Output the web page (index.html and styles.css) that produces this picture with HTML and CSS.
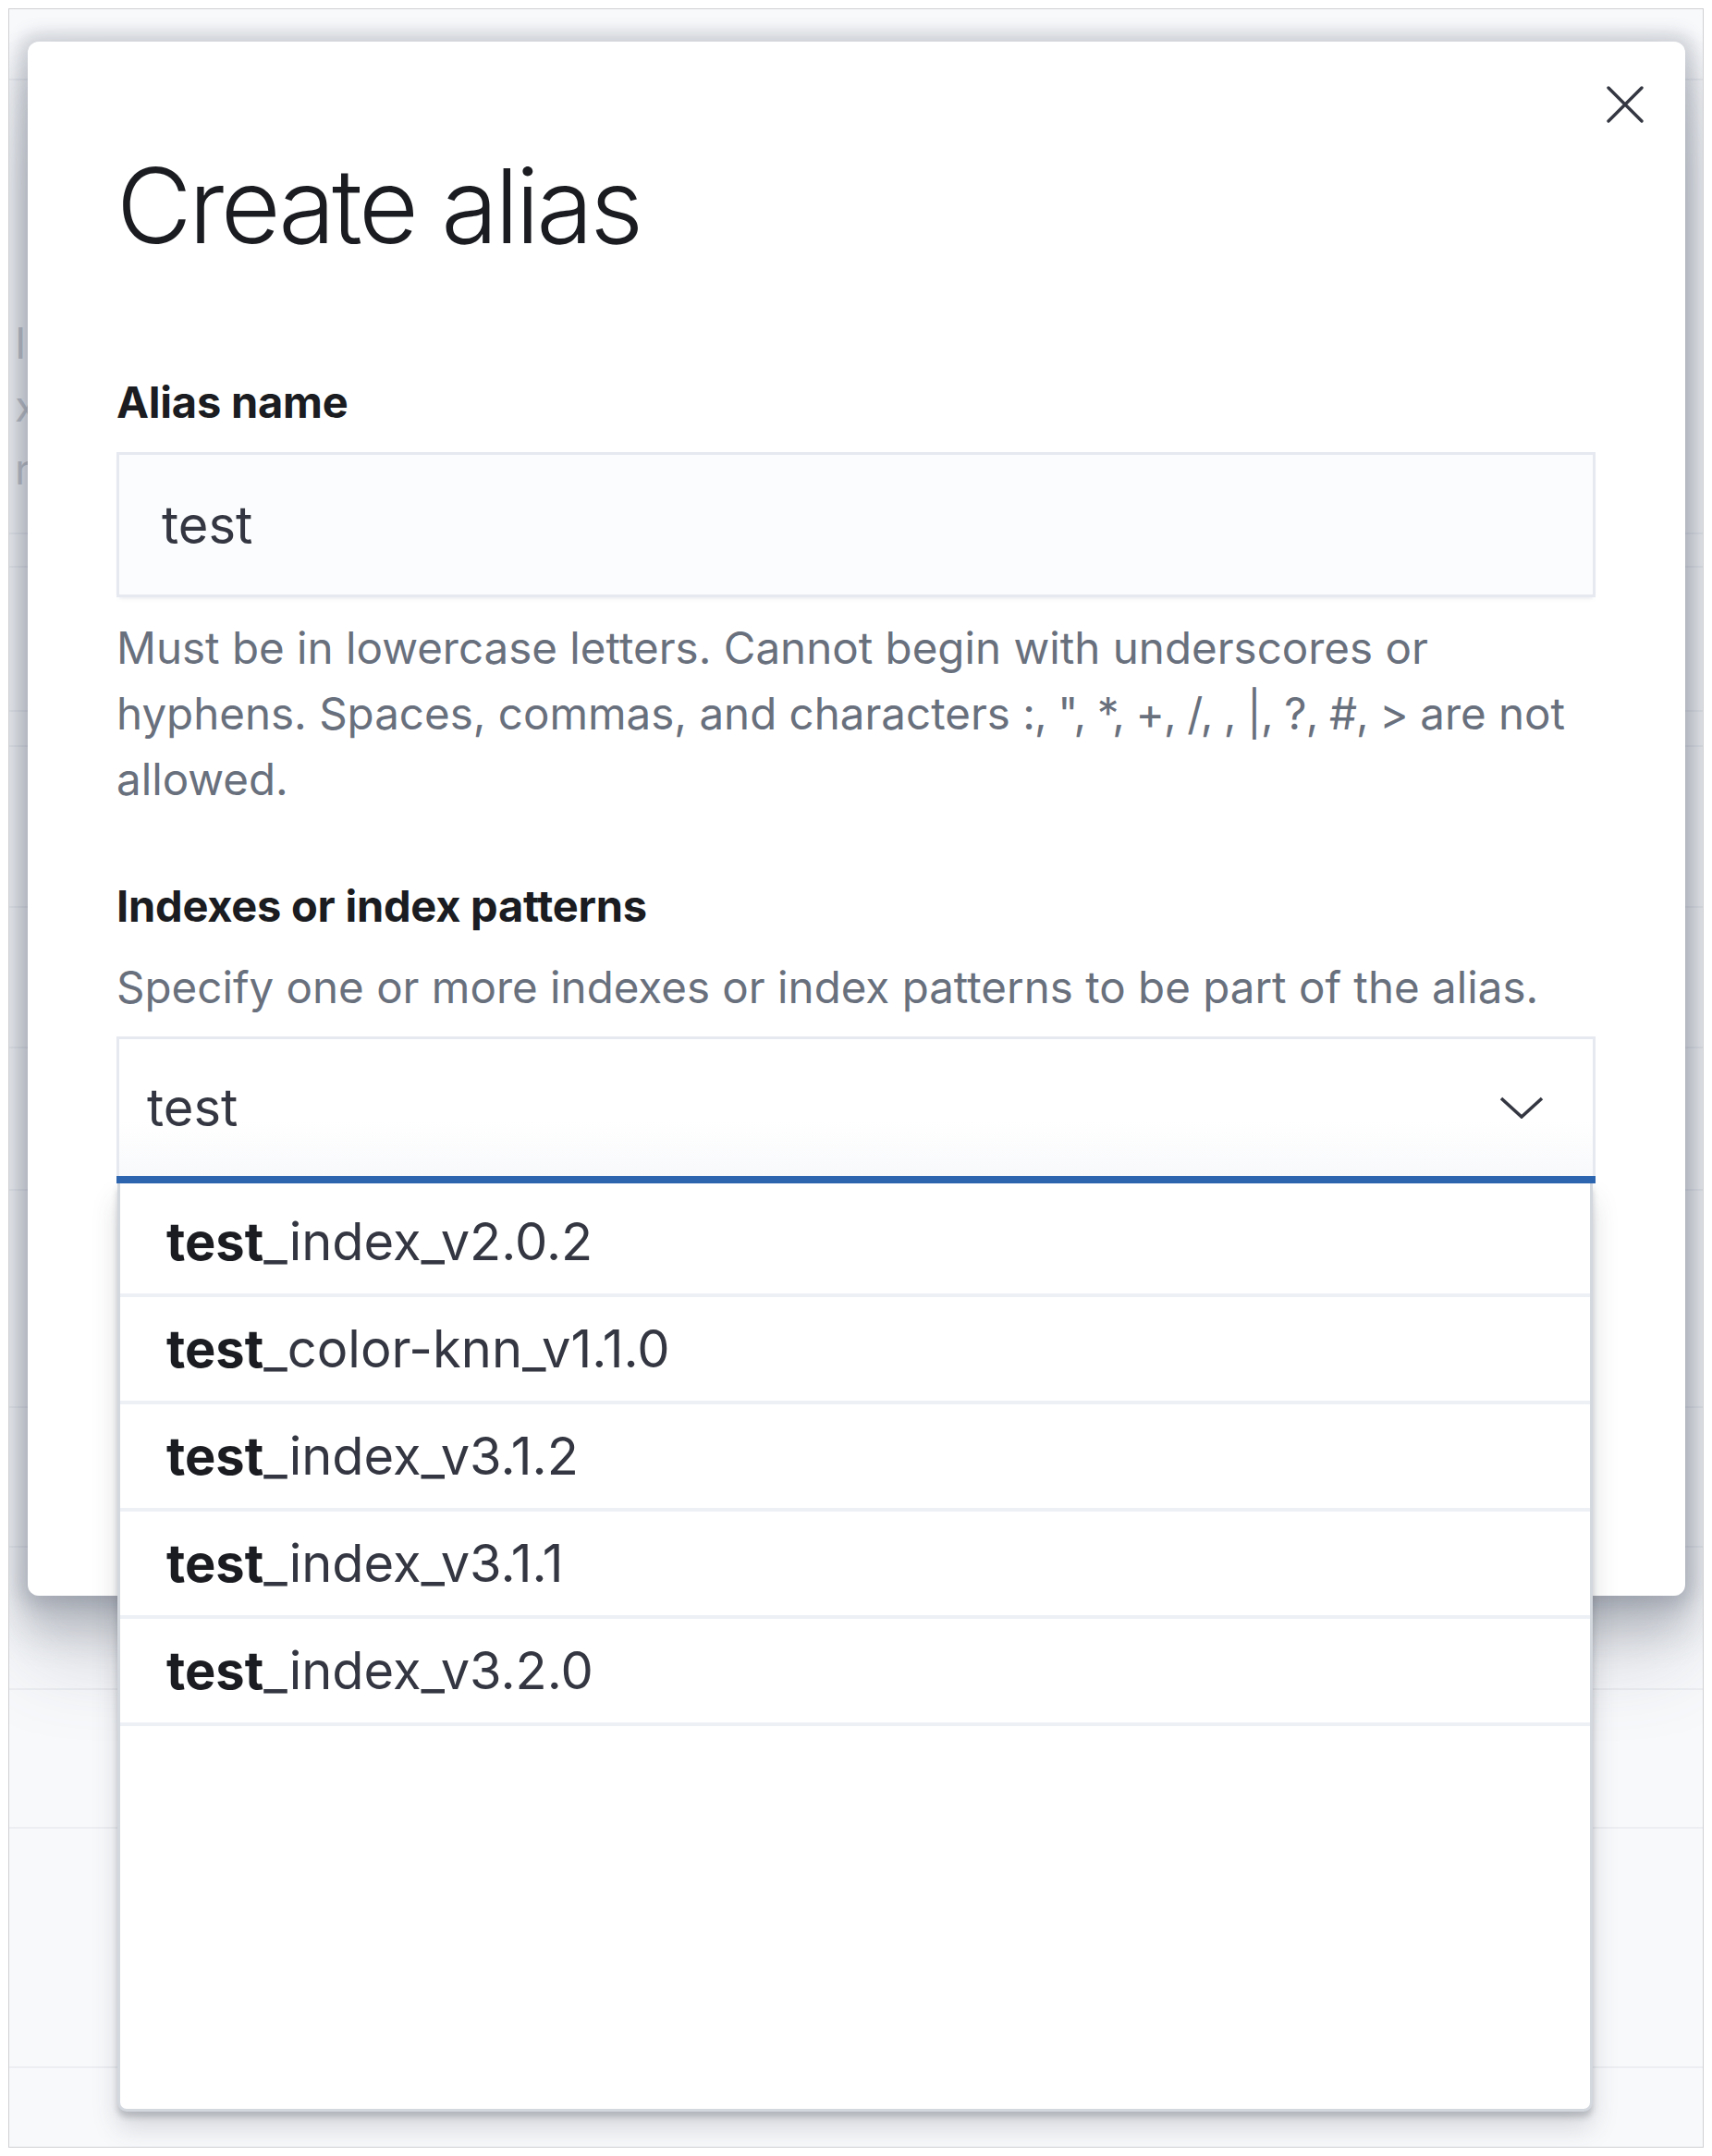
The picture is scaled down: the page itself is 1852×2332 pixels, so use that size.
FILE: index.html
```html
<!DOCTYPE html>
<html lang="en">
<head>
<meta charset="utf-8">
<title>Create alias</title>
<link rel="stylesheet" href="styles.css">
</head>
<body>
<div class="frame">
  <div class="backdrop">
    <div class="bg-row r1"></div>
    <div class="bg-row r2"><div class="ghost"><span>I</span><span>x</span><span>n</span></div></div>
    <div class="bg-row r3"></div>
    <div class="bg-row r4"></div>
    <div class="bg-row r5"></div>
    <div class="bg-row r6"></div>
    <div class="bg-row r7"></div>
    <div class="bg-row r8"></div>
    <div class="bg-row r9"></div>
    <div class="bg-row r10"></div>
    <div class="bg-row r11"></div>
    <div class="bg-row r12"></div>
    <div class="bg-row r13"></div>
  </div>

  <div class="modal">
    <button class="close" aria-label="Close">
      <svg width="40" height="40" viewBox="0 0 40 40"><path d="M2 2 L38 38 M38 2 L2 38" stroke="#343741" stroke-width="3.4" stroke-linecap="round" fill="none"/></svg>
    </button>
    <h1 class="title">Create alias</h1>

    <div class="form-row">
      <label class="label">Alias name</label>
      <div class="input">test</div>
      <p class="help"><span class="line">Must be in lowercase letters. Cannot begin with underscores or</span> <span class="line">hyphens. Spaces, commas, and characters <span class="chars">:, ", *, +, /, , |, ?, #, &gt;</span> are not</span> <span class="line">allowed.</span></p>
    </div>

    <div class="form-row second">
      <label class="label">Indexes or index patterns</label>
      <p class="desc">Specify one or more indexes or index patterns to be part of the alias.</p>
      <div class="combo">
        <div class="combo-field">
          <span class="combo-value">test</span>
          <svg class="chevron" width="48" height="24" viewBox="0 0 48 24"><path d="M2 2 L24 22 L46 2" stroke="#343741" stroke-width="3.6" stroke-linejoin="miter" fill="none"/></svg>
        </div>
        <div class="combo-line"></div>
        <ul class="options">
          <li class="option"><b>test</b>_index_v2.0.2</li>
          <li class="option"><b>test</b>_color-knn_v1.1.0</li>
          <li class="option"><b>test</b>_index_v3.1.2</li>
          <li class="option"><b>test</b>_index_v3.1.1</li>
          <li class="option"><b>test</b>_index_v3.2.0</li>
        </ul>
      </div>
    </div>
  </div>
</div>
</body>
</html>
```

FILE: styles.css
```css
* { box-sizing: border-box; }
html, body { margin: 0; padding: 0; background: #ffffff; }
body { font-family: Inter, "Noto Sans", "Liberation Sans", sans-serif; }

.frame {
  position: relative;
  margin: 9px 0 0 9px;
  width: 1834px;
  height: 2314px;
  border: 1px solid #cfd0d3;
  background: #f8f9fb;
  overflow: hidden;
}

/* underlying page, masked */
.backdrop { display: flex; flex-direction: column; }
.bg-row { border-bottom: 2px solid #eceef2; flex: none; }
.r1 { height: 77px; }
.r2 { height: 491px; }
.r3 { height: 36px; }
.r4 { height: 156px; }
.r5 { height: 38px; }
.r6 { height: 174px; }
.r7 { height: 152px; }
.r8 { height: 154px; }
.r9 { height: 235px; }
.r10 { height: 151px; }
.r11 { height: 154px; }
.r12 { height: 150px; }
.r13 { height: 259px; }
.ghost {
  display: flex; flex-direction: column;
  margin: 250px 0 0 6px;
  font-size: 46px; line-height: 68px;
  color: #c4c7cd;
}

/* modal */
.modal {
  position: absolute;
  left: 20px;
  top: 35px;
  width: 1793px;
  height: 1681px;
  background: #ffffff;
  border-radius: 12px;
  padding: 97px 97px 0 96px;
  box-shadow:
    0 0 18px 10px rgba(70, 78, 98, 0.2),
    0 30px 40px 8px rgba(70, 78, 98, 0.24),
    0 70px 90px 0 rgba(70, 78, 98, 0.2);
}
.close {
  position: absolute;
  left: 1708px;
  top: 48px;
  width: 40px;
  height: 40px;
  padding: 0;
  border: 0;
  background: none;
  display: block;
}
.close svg { display: block; }

.title {
  margin: 0;
  font-size: 112px;
  line-height: 160px;
  font-weight: 300;
  letter-spacing: -0.032em;
  color: #1a1c21;
}

.form-row { display: flex; flex-direction: column; margin-top: 97px; }
.form-row.second { margin-top: 66px; }

.label {
  font-size: 47px;
  line-height: 72px;
  font-weight: 700;
  color: #1a1c21;
  letter-spacing: -0.005em;
}

.input {
  margin-top: 18px;
  height: 157px;
  display: flex;
  align-items: center;
  padding-left: 49px;
  background: #fbfcfd;
  font-size: 56px;
  color: #343741;
  box-shadow: inset 0 0 0 3px #e6e9f0, 0 4px 4px -3px rgba(152, 162, 179, 0.25);
}

.help, .desc {
  margin: 19px 0 0;
  font-size: 47.5px;
  line-height: 71px;
  color: #69707d;
}
.help .line { display: block; white-space: nowrap; }
.help .chars { letter-spacing: -0.9px; }
.desc { margin-top: 16px; }

.combo { position: relative; margin-top: 18px; }
.combo-field {
  height: 151px;
  border: 3px solid #e6e9f0;
  border-bottom: 0;
  background: linear-gradient(to bottom, #ffffff 60%, #f8f9fb 100%);
  display: flex;
  align-items: center;
  padding: 0 53px 0 30px;
}
.combo-value { font-size: 56px; color: #343741; }
.chevron { margin-left: auto; display: block; }
.combo-line { height: 8px; background: #2e67b0; }

.options {
  position: absolute;
  top: 100%;
  left: 1px;
  width: 1596px;
  height: 1004px;
  margin: 0;
  padding: 7px 0 0;
  list-style: none;
  background: #ffffff;
  border: 3px solid #d3d7de;
  border-top: 0;
  border-radius: 0 0 10px 10px;
  box-shadow:
    0 6px 6px rgba(60, 66, 80, 0.24),
    0 18px 28px rgba(60, 66, 80, 0.18);
}
.option {
  height: 116px;
  line-height: 112px;
  border-bottom: 4px solid #edf0f5;
  padding-left: 50px;
  font-size: 56px;
  color: #343741;
  white-space: nowrap;
}
.option b { font-weight: 700; color: #1a1c21; }
```
